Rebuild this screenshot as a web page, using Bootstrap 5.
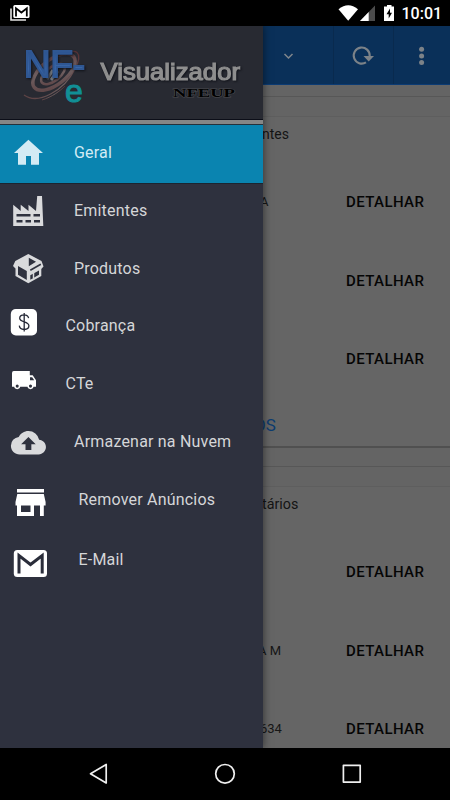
<!DOCTYPE html>
<html lang="pt-BR">
<head>
<meta charset="utf-8">
<meta name="viewport" content="width=device-width, initial-scale=1">
<title>Visualizador NF-e</title>
<link href="https://cdn.jsdelivr.net/npm/bootstrap@5.3.0/dist/css/bootstrap.min.css" rel="stylesheet">
<style>
  body { font-family: Roboto, "Liberation Sans", sans-serif; background: #000; color: #000; }
  svg { display: block; flex: none; }
  .phone { width: 450px; height: 800px; }
  .status { height: 26px; }
  .clock { font-size: 16px; font-weight: 500; width: 48.5px; line-height: 26px; padding-top: 1px; }
  .sysnav { height: 52px; }
  .stage { background: #646464; min-height: 0; }
  .toolbar { height: 59px; background: #0a3059; border-bottom: 1px solid #0b3b74; }
  .tool + .tool { border-left: 1px solid #092a4e; }
  .tool-a { width: 333px; } .tool-b { width: 60px; } .tool-c { width: 57px; }
  .gap-strip { height: 12px; border-bottom: 1px solid #575757; }
  .gap-strip.tall { height: 19px; }
  .panel { margin-top: 19px; border-top: 1px solid #5e5e5e; height: 332px; background: #656565; border-bottom: 2px solid #505050; }
  .panel-head { height: 46px; font-size: 14px; line-height: 35px; color: #141414; }
  .panel-head.wide { font-size: 14.3px; line-height: 34px; }
  .entry { height: 78.5px; }
  .entry-name { font-size: 13px; color: #161616; line-height: 20px; }
  .entry-btn { font-size: 15px; font-weight: 500; letter-spacing: .4px; width: 104px; color: #050505; }
  .more { font-size: 17px; color: #0c3c70; line-height: 20px; padding-top: 16px; }
  .cut { margin-left: 262px; white-space: nowrap; }
  .cut-a { margin-left: 260px; } .cut-am { margin-left: 258px; } .cut-os { margin-left: 254px; }
  .drawer { width: 262.5px; background: #2e313e; box-shadow: 0 0 8px rgba(0,0,0,.55); }
  .brand { height: 93px; background: #282a32; }
  .brand-rule { height: 6px; background: #868686; border-top: 1px solid #0c0e18; border-bottom: 1px solid #26313b; }
  .item { height: 58px; font-size: 16px; line-height: 56px; color: #d5d6d8; letter-spacing: .2px; }
  .item.up { line-height: 54px; }
  .item.on { background: #0a84b0; color: #d3ebf4; box-shadow: 0 1px #1c2530; }
  .lab-l { margin-left: 16px; } .lab-s { margin-left: 7.5px; } .lab-x { margin-left: 20.5px; }
  .lab-mail { padding-top: 2px; }
  .drop { filter: drop-shadow(1px 1px 1px #101219); }
  .outlined { paint-order: stroke; }
</style>
<script src="https://cdn.jsdelivr.net/npm/bootstrap@5.3.0/dist/js/bootstrap.bundle.min.js"></script>
</head>
<body class="m-0 overflow-hidden">
<div class="phone d-flex flex-column overflow-hidden">

  <header class="status d-flex bg-black text-white">
    <svg width="40" height="26" viewBox="0 0 40 26">
      <path d="M11 8.500V20H26" fill="none" stroke="#e4e4e4" stroke-width="1.600"/>
      <rect x="13.300" y="5" width="16.200" height="13" rx="1.500" fill="#fff"/>
      <path d="M16 16.500V8.300L21.400 12.500L26.800 8.300V16.500" fill="none" stroke="#000" stroke-width="1.800"/>
    </svg>
    <svg class="ms-auto" width="67" height="26" viewBox="335 0 67 26">
      <path d="M338.500 9.200Q348.200 1.500 358 9.200L348.200 20.700Z" fill="#fff"/>
      <path d="M375 5.500V21H360Z" fill="#4c4c4c"/>
      <path d="M368.700 12V21H360Z" fill="#fff"/>
      <path d="M384 6.500H387V5H391.500V6.500H394V21H384Z" fill="#fff"/>
      <path d="M390 8.500L386.500 14.200H388.700V18.500L392 12.700H390Z" fill="#000"/>
    </svg>
    <div class="clock">10:01</div>
  </header>

  <main class="stage flex-grow-1 position-relative overflow-hidden">
    <div class="toolbar d-flex">
      <div class="tool tool-a d-flex justify-content-end">
        <svg width="70" height="58" viewBox="263 26 70 58"><path d="M284.500 54L288.500 58L292.500 54" fill="none" stroke="#80868c" stroke-width="1.500"/></svg>
      </div>
      <div class="tool tool-b">
        <svg width="59" height="58" viewBox="334 26 59 58">
          <path d="M366 62.300A8 8 0 1 1 369.700 56" fill="none" stroke="#7c8288" stroke-width="2.100"/>
          <path d="M363.500 56H374L368.700 61.500Z" fill="#7c8288"/>
        </svg>
      </div>
      <div class="tool tool-c">
        <svg width="56" height="58" viewBox="394 26 56 58" fill="#7c8288"><circle cx="421.600" cy="49.300" r="2.500"/><circle cx="421.600" cy="56" r="2.500"/><circle cx="421.600" cy="62.600" r="2.500"/></svg>
      </div>
    </div>
    <div class="gap-strip"></div>

    <section class="panel">
      <div class="panel-head"><div class="cut">ntes</div></div>
      <div>
        <div class="entry d-flex align-items-center"><div class="cut cut-a entry-name">A</div><div class="entry-btn ms-auto">DETALHAR</div></div>
        <div class="entry d-flex align-items-center"><div class="entry-btn ms-auto">DETALHAR</div></div>
        <div class="entry d-flex align-items-center"><div class="entry-btn ms-auto">DETALHAR</div></div>
      </div>
      <div class="more"><div class="cut cut-os">OS</div></div>
    </section>
    <div class="gap-strip tall"></div>

    <section class="panel">
      <div class="panel-head wide"><div class="cut">tários</div></div>
      <div>
        <div class="entry d-flex align-items-center"><div class="entry-btn ms-auto">DETALHAR</div></div>
        <div class="entry d-flex align-items-center"><div class="cut cut-am entry-name">A M</div><div class="entry-btn ms-auto">DETALHAR</div></div>
        <div class="entry d-flex align-items-center"><div class="cut cut-a entry-name">634</div><div class="entry-btn ms-auto">DETALHAR</div></div>
      </div>
    </section>

    <aside class="drawer position-absolute top-0 start-0 h-100">
      <div class="brand">
        <svg width="262" height="93" viewBox="0 26 262 93">
          <defs>
            <linearGradient id="blue" x1="0" y1="0" x2="0" y2="1"><stop offset="0" stop-color="#264b86"/><stop offset=".6" stop-color="#3a67a8"/><stop offset="1" stop-color="#254576"/></linearGradient>
            <linearGradient id="swirl" x1="0" y1="1" x2="1" y2="0"><stop offset="0" stop-color="#5c4042"/><stop offset=".5" stop-color="#6e5f60"/><stop offset="1" stop-color="#582f32"/></linearGradient>
          </defs>
          <g fill="none" stroke="url(#swirl)">
            <path d="M24 95C38 105 64 91 75 69C84 51 75 48 65 55" stroke-width="1.300"/>
            <ellipse cx="54" cy="72" rx="25" ry="12.500" transform="rotate(-38 54 72)" stroke-width="3.500"/>
            <ellipse cx="53" cy="74" rx="14" ry="7" transform="rotate(-38 53 74)" stroke-width="2.500"/>
            <path d="M42 100C52 97 60 91 65 86" stroke-width="1"/>
            <path d="M47 79L53 70M51 80L58 71" stroke="#74777c" stroke-width="3"/>
          </g>
          <g font-family="Liberation Sans, Arial, sans-serif">
            <text class="drop" x="24" y="77" font-size="36" textLength="61" lengthAdjust="spacingAndGlyphs" fill="url(#blue)" stroke="#2f5793" stroke-width="2">NF-</text>
            <text x="65" y="101.500" font-size="32" fill="#118f96" stroke="#118f96" stroke-width="1">e</text>
            <text class="drop" x="100.500" y="80.300" font-size="24" textLength="139.500" lengthAdjust="spacingAndGlyphs" fill="#8f8f8f" stroke="#8f8f8f" stroke-width="1.200">Visualizador</text>
          </g>
          <text class="outlined" x="173" y="96.500" font-family="Liberation Serif, Times New Roman, serif" font-weight="bold" font-size="13" textLength="62" lengthAdjust="spacingAndGlyphs" fill="#000" stroke="#4a4b50" stroke-width="1">NFEUP</text>
        </svg>
      </div>
      <div class="brand-rule"></div>

      <nav>
        <div class="item on d-flex">
          <svg width="58" height="58" viewBox="0 125 58 58" fill="#d3ebf4"><path d="M28.400 139.700L43 153H39V164.700H31V156H26V164.700H18V153H14Z"/></svg>
          <span class="lab-l">Geral</span>
        </div>
        <div class="item d-flex">
          <svg width="58" height="58" viewBox="0 183 58 58">
            <path d="M13.200 204.700L20.700 211V204.700L28.500 211V204.700L36 211L37.200 196H42L43.300 226H13.200Z" fill="#d9dadc"/>
            <path d="M16.500 215.200H30.500M33.500 215.200H40M16.500 221.200H22.500M25.500 221.200H31M34 221.200H40" stroke="#2e313e" stroke-width="2.400"/>
          </svg>
          <span class="lab-l">Emitentes</span>
        </div>
        <div class="item d-flex">
          <svg width="58" height="58" viewBox="0 241 58 58">
            <path d="M28.300 254L41.500 261L43.500 266.500L41.300 269V276L28.300 283.300L15.500 276V268.500L13 266L15.300 261Z" fill="#d9dadc"/>
            <path d="M18 266L26.800 271V280L18 274.800ZM28.800 257.800L36 261.800L28.800 266.300ZM30.300 275.300L39 270.500V274.800L30.300 279.800Z" fill="#2e313e"/>
            <path d="M30.300 270.300L40.800 264.300" fill="none" stroke="#2e313e" stroke-width="1.600"/>
            <path d="M33.500 273V278" stroke="#d9dadc" stroke-width="1.500"/>
          </svg>
          <span class="lab-l">Produtos</span>
        </div>
        <div class="item up d-flex">
          <svg width="58" height="58" viewBox="0 299 58 58">
            <rect x="10.800" y="309" width="26.200" height="26.500" rx="5" fill="#fff"/>
            <path d="M28.600 318.200C28.200 315.900 26.500 314.900 24.100 314.900C21.500 314.900 19.700 316.300 19.700 318.300C19.700 323 28.900 320.600 28.900 325.800C28.900 328 27 329.500 24.200 329.500C21.400 329.500 19.600 328.200 19.300 325.700M24.200 313V331.400" fill="none" stroke="#262937" stroke-width="1.300"/>
          </svg>
          <span class="lab-s">Cobrança</span>
        </div>
        <div class="item up d-flex">
          <svg width="58" height="58" viewBox="0 357 58 58">
            <path d="M13.800 371H29.800V375.300H32.700L36 380.200V386.800H12V373Q12 371 13.800 371Z" fill="#fff"/>
            <path d="M30 377.200H32.200L34.200 380.300H30Z" fill="#2e313e"/>
            <g fill="#2e313e" stroke="#fff" stroke-width="1.500"><circle cx="17.200" cy="386.100" r="2.300"/><circle cx="30.500" cy="386.100" r="2.300"/></g>
          </svg>
          <span class="lab-s">CTe</span>
        </div>
        <div class="item up d-flex">
          <svg width="58" height="58" viewBox="0 415 58 58">
            <path transform="translate(10.900 425.200) scale(1.460)" d="M19.350 10.040A7.490 7.490 0 0 0 12 4C9.110 4 6.600 5.640 5.350 8.040A5.994 5.994 0 0 0 0 14c0 3.310 2.690 6 6 6h13c2.760 0 5-2.240 5-5c0-2.640-2.050-4.780-4.650-4.960zM14 13v4h-4v-4H7l5-5l5 5h-3z" fill="#d9dadc"/>
          </svg>
          <span class="lab-l">Armazenar na Nuvem</span>
        </div>
        <div class="item up d-flex">
          <svg width="58" height="58" viewBox="0 473 58 58">
            <path fill="#fff" d="M17 489H44V492.500H17ZM17.300 494H43.800L45.600 502V505.500H43.800V516H40V505.500H34V516H17V505.500H15.500V502ZM21 505.500V512H30.500V505.500Z" fill-rule="evenodd"/>
          </svg>
          <span class="lab-x">Remover Anúncios</span>
        </div>
        <div class="item up d-flex">
          <svg width="58" height="58" viewBox="0 531 58 58">
            <rect x="13.800" y="550" width="33.200" height="27" rx="3.500" fill="#fff"/>
            <path d="M19 573.500V555.500L30.500 564.500L42.200 555.500V573.500" fill="none" stroke="#2a2d3a" stroke-width="3"/>
          </svg>
          <span class="lab-x lab-mail">E-Mail</span>
        </div>
      </nav>
    </aside>
  </main>

  <footer class="sysnav bg-black">
    <svg width="450" height="52" viewBox="0 748 450 52" fill="none" stroke="#efefef" stroke-width="1.700" stroke-linejoin="round">
      <path d="M106.200 764.500V783L90.500 773.700Z"/>
      <circle cx="225" cy="773.800" r="9.300"/>
      <rect x="343.400" y="765.300" width="16.800" height="16.800"/>
    </svg>
  </footer>
</div>
</body>
</html>
